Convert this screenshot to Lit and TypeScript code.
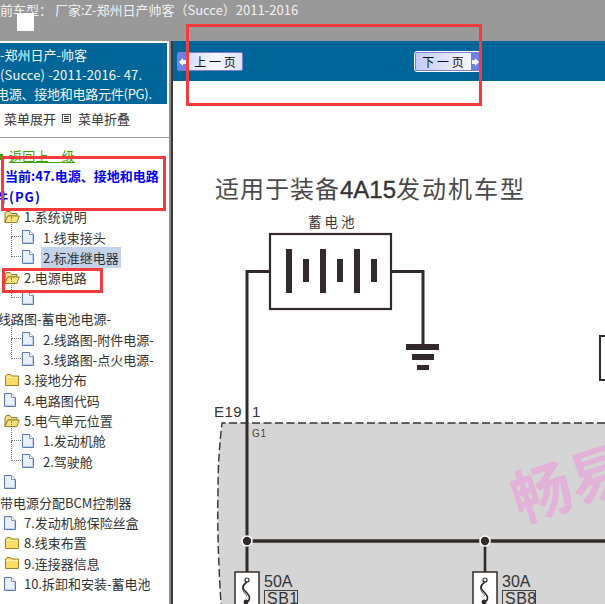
import { LitElement, html, css, svg } from "lit";
import { customElement } from "lit/decorators.js";

const folderOpen = html`<svg class="ic folder" viewBox="0 0 16 14"><path d="M1 3.5 2.5 1.5H6L7.5 3.5H13V6H4L1 12.5Z" fill="#f6dc86" stroke="#7d6c2c" stroke-width=".9"/><path d="M1 12.5 3.8 6H15.3L12.8 12.5Z" fill="#fbe27a" stroke="#9a8228" stroke-width="1"/></svg>`;
const folderClosed = html`<svg class="ic folder" viewBox="0 0 16 14"><path d="M1.5 12.5V3L3 1.5H6.5L8 3H14.5V12.5Z" fill="#fbdc6a" stroke="#9a8228" stroke-width="1"/><path d="M2 4.5H14" stroke="#fff3b0"/></svg>`;
const doc = html`<svg class="ic doc" viewBox="0 0 12 14"><path d="M.5.5H7.5L11.5 4.5V13.5H.5Z" fill="#e9f0fb" stroke="#5a78b8"/><path d="M7.5.5V4.5H11.5" fill="#fff" stroke="#7a94c8"/><path d="M1.5 12.5H10.5V5" fill="none" stroke="#bcd0ee"/></svg>`;

type Row = { t?: string; k: "f" | "c" | "d" | "s" | "x" | "blank" | "lead" | "blankTop"; sel?: boolean };
const rows: Row[] = [
  { t: "1.系统说明", k: "f" },
  { t: "1.线束接头", k: "s" },
  { t: "2.标准继电器", k: "s", sel: true },
  { t: "2.电源电路", k: "f" },
  { k: "blank" },
  { t: "线路图-蓄电池电源-", k: "x" },
  { t: "2.线路图-附件电源-", k: "s" },
  { t: "3.线路图-点火电源-", k: "s" },
  { t: "3.接地分布", k: "c" },
  { t: "4.电路图代码", k: "d" },
  { t: "5.电气单元位置", k: "f" },
  { t: "1.发动机舱", k: "s" },
  { t: "2.驾驶舱", k: "s" },
  { k: "blankTop" },
  { t: "带电源分配BCM控制器", k: "lead" },
  { t: "7.发动机舱保险丝盒", k: "d" },
  { t: "8.线束布置", k: "c" },
  { t: "9.连接器信息", k: "c" },
  { t: "10.拆卸和安装-蓄电池", k: "d" },
];

@customElement("app-root")
export class AppRoot extends LitElement {
  static styles = css`
    :host { display: block; width: 605px; height: 604px; position: relative; overflow: hidden; background: #fff;
      font-family: "Noto Sans CJK SC", "Liberation Sans", sans-serif; color: #333; }
    .top { height: 41px; background: #999; color: #f1f1f1; font-size: 13px; line-height: 20px; box-sizing: border-box; position: relative; white-space: nowrap; overflow: hidden; }
    .sq { position: absolute; left: 17px; top: 13px; width: 17px; height: 18px; background: #fff; }
    .main { display: flex; height: 563px; }
    .left { width: 169px; flex: none; overflow: hidden; padding-top: 2px; box-sizing: border-box; }
    .split { width: 4px; flex: none; background: linear-gradient(90deg, #8c8c8c 0, #8c8c8c 50%, #3a3a3a 50%, #3a3a3a 100%); }
    .right { flex: 1; position: relative; overflow: hidden; }
    .brand { width: 167px; height: 61px; background: #006699; color: #f2f6f8; font-size: 13px; line-height: 19.5px; padding-top: 2px; box-sizing: border-box; white-space: nowrap; overflow: hidden; }
    .l2 { letter-spacing: .12px; }
    .l3 { margin-left: -4px; letter-spacing: -.25px; }
    .tools { height: 34px; display: flex; align-items: center; font-size: 13px; padding: 0 0 5px 4px; box-sizing: border-box; border-bottom: 1px solid #999; color: #333; }
    .tools svg { width: 9px; height: 9px; margin: 0 7px 0 6px; }
    .back { height: 39px; padding: 8px 0 0 9px; box-sizing: border-box; font-size: 13px; color: #3fa400; text-decoration: underline; line-height: 20px; letter-spacing: .2px; position: relative; }
    .back i { position: absolute; left: 0; top: 16px; width: 3px; height: 6px; background: #3fa400; }
    .cur { color: #0000ee; font-weight: 700; font-size: 13px; line-height: 21px; height: 41px; padding-left: 5px; white-space: nowrap; margin-top: -12px; margin-bottom: .5px; }
    .cur div:last-child { margin-left: -10px; letter-spacing: 1px; }
    .tree { font-size: 13px; color: #333; }
    .row { height: 20.4px; display: flex; align-items: center; white-space: nowrap; position: relative; }
    .ic { flex: none; display: block; }
    .folder { width: 16px; height: 14px; margin: 0 4px 0 4px; }
    .doc { width: 12px; height: 14px; }
    .row.d .doc { margin: 0 8px 0 4px; }
    .row.s, .row.blank { padding-left: 11px; }
    .row.s .doc, .row.blank .doc { margin-left: 11px; margin-right: 9px; }
    .dots { position: absolute; left: 11px; top: -10px; height: 20px; width: 10px; border-left: 1px dotted #777; border-bottom: 1px dotted #777; box-sizing: border-box; }
    .sel { background: #c2d3ea; padding: 0 2px; margin-left: -2px; height: 21px; line-height: 21px; }
    .row.x { margin-left: -2px; }
    svg.draw { position: absolute; left: 0; top: 0; width: 432px; height: 563px; display: block; }
    .band { height: 40px; background: #006699; position: relative; }
    .btn { position: absolute; top: 11px; height: 19px; width: 66px; box-sizing: border-box; border: 1px solid #7f7fc8; border-radius: 2px; background: linear-gradient(90deg, #ccd2fb, #f8f8ff 60%, #dfe2fb); color: #111; font-size: 12px; line-height: 17px; display: flex; align-items: center; justify-content: center; }
    .prev { left: 4px; padding-left: 10px; }
    .next { left: 242px; outline: 1px solid #fff; padding-right: 10px; background: linear-gradient(90deg, #c2cbfa, #f6f6ff 85%); }
    .arr { position: absolute; top: 0; bottom: 0; width: 9px; background: #6f7fe8; display: flex; align-items: center; justify-content: center; }
    .prev .arr { left: 0; } .next .arr { right: 0; }
    .arr svg { width: 7px; height: 8px; }
    .red { position: absolute; border: 3px solid #f53b3b; box-sizing: border-box; pointer-events: none; }
    .r1 { left: 186px; top: 24px; width: 296px; height: 82px; }
    .r2 { left: 1px; top: 156px; width: 165px; height: 55px; }
    .r3 { left: 2px; top: 268px; width: 101px; height: 25px; }
  `;

  private fuse(x: number) {
    return svg`
      <rect x=${x - 12} y="531" width="24" height="40" fill="#fff" stroke="#332b2b" stroke-width="1.5"/>
      <circle cx=${x} cy="539" r="2" fill="#fff" stroke="#332b2b" stroke-width="1.2"/>
      <path d="M${x} 541C${x - 7} 546 ${x - 3} 549 ${x} 552C${x + 4} 556 ${x + 3} 560 ${x - 1} 561" fill="none" stroke="#332b2b" stroke-width="1.6"/>
      <path d="M${x - 3} 543C${x - 7} 548 ${x - 2} 552 ${x} 555" fill="none" stroke="#332b2b" stroke-width=".8"/>
      <circle cx=${x - 1} cy="561" r="2.4" fill="#332b2b"/>
    `;
  }

  private diagram() {
    const ink = "#332b2b";
    const bars = [116, 133, 150, 167, 184, 201];
    return svg`<svg class="draw" viewBox="0 0 432 563">
      <path d="M49 382 H432 V563 H48 C46 530 44 490 45 450 C45 420 47 400 49 382Z" fill="#d5d5d5"/>
      <path d="M432 382 H49 C47 400 45 420 45 450 C44 490 46 530 48 563" fill="none" stroke="#333" stroke-width="1.4" stroke-dasharray="8 3.5"/>
      <text x="42" y="157" font-size="24" letter-spacing="1" fill="#4a4a4a">适用于装备<tspan font-family="'Liberation Sans',sans-serif" fill="#333" stroke="#333" stroke-width=".35" letter-spacing="0">4A15</tspan><tspan letter-spacing="2">发动机车型</tspan></text>
      <text x="135" y="186" font-size="13.5" letter-spacing="3" fill="#3a3a3a">蓄电池</text>
      <rect x="97" y="193" width="121" height="75" fill="#fff" stroke=${ink} stroke-width="2.2"/>
      ${bars.map((x, i) => i % 2 === 0
        ? svg`<rect x=${x - 3} y="208" width="6" height="44" fill=${ink}/>`
        : svg`<rect x=${x - 3} y="218" width="6" height="23" fill=${ink}/>`)}
      <path d="M96 230.5H74V563" fill="none" stroke=${ink} stroke-width="3"/>
      <path d="M219 230.5H250V303" fill="none" stroke=${ink} stroke-width="3"/>
      <rect x="233" y="303" width="33" height="6" fill=${ink}/>
      <rect x="239" y="313" width="22" height="6" fill=${ink}/>
      <rect x="244" y="324" width="12" height="5" fill=${ink}/>
      <path d="M433 295H427V339H433" fill="#fff" stroke=${ink} stroke-width="2"/>
      <text x="41" y="376" font-size="15" font-family="'Liberation Sans',sans-serif" fill="#333" letter-spacing=".4">E19</text>
      <text x="79" y="376" font-size="15" font-family="'Liberation Sans',sans-serif" fill="#333">1</text>
      <text x="79" y="396" font-size="10" font-family="'Liberation Sans',sans-serif" fill="#444" letter-spacing=".6">G1</text>
      <text x="347" y="482" font-size="60" font-weight="700" fill="#e2b2d8" transform="rotate(-18 347 482)">畅易</text>
      <path d="M74 500H432" stroke=${ink} stroke-width="3.4"/>
      <path d="M312 500V531" stroke=${ink} stroke-width="2.6"/>
      <circle cx="74" cy="500" r="5" fill=${ink} stroke="#fff" stroke-width="1.6"/>
      <circle cx="312" cy="500" r="5" fill=${ink} stroke="#fff" stroke-width="1.6"/>
      ${this.fuse(74)}
      ${this.fuse(312)}
      <text x="91" y="546" font-size="16" font-family="'Liberation Sans',sans-serif" fill="#333">50A</text>
      <rect x="91.5" y="549.5" width="33" height="20" fill="none" stroke="#444"/>
      <text x="94" y="563" font-size="16" font-family="'Liberation Sans',sans-serif" fill="#333" letter-spacing=".5">SB1</text>
      <text x="329" y="546" font-size="16" font-family="'Liberation Sans',sans-serif" fill="#333">30A</text>
      <rect x="329.5" y="549.5" width="33" height="20" fill="none" stroke="#444"/>
      <text x="332" y="563" font-size="16" font-family="'Liberation Sans',sans-serif" fill="#333" letter-spacing=".5">SB8</text>
    </svg>`;
  }

  private row(r: Row) {
    const text = r.sel ? html`<span class="sel">${r.t}</span>` : html`<span>${r.t}</span>`;
    if (r.k === "f") return html`<div class="row f">${folderOpen}${text}</div>`;
    if (r.k === "c") return html`<div class="row c">${folderClosed}${text}</div>`;
    if (r.k === "d") return html`<div class="row d">${doc}${text}</div>`;
    if (r.k === "s") return html`<div class="row s"><i class="dots"></i>${doc}${text}</div>`;
    if (r.k === "blank") return html`<div class="row blank"><i class="dots"></i>${doc}</div>`;
    if (r.k === "blankTop") return html`<div class="row d">${doc}</div>`;
    return html`<div class="row ${r.k}">${text}</div>`;
  }

  render() {
    return html`
      <div class="top">前车型： 厂家:Z-郑州日产帅客（Succe）2011-2016<i class="sq"></i></div>
      <div class="main">
        <div class="left">
          <div class="brand">
            <div>-郑州日产-帅客</div>
            <div class="l2">(Succe) -2011-2016- 47.</div>
            <div class="l3">电源、接地和电路元件(PG).</div>
          </div>
          <div class="tools">
            <span>菜单展开</span>
            <svg viewBox="0 0 9 9"><rect x=".5" y=".5" width="8" height="8" fill="#fff" stroke="#555"/><path d="M2 2.5H7M2 4.5H7M2 6.5H7" stroke="#333"/></svg>
            <span>菜单折叠</span>
          </div>
          <div class="back"><i></i>返回上一级</div>
          <div class="cur"><div>当前:47.电源、接地和电路</div><div>件(PG)</div></div>
          <div class="tree">${rows.map((r) => this.row(r))}</div>
        </div>
        <div class="split"></div>
        <div class="right">
          <div class="band">
            <div class="btn prev"><span class="arr"><svg viewBox="0 0 7 8"><path d="M0 4 4 0V2H7V6H4V8Z" fill="#fff"/></svg></span>上 一 页</div>
            <div class="btn next">下 一 页<span class="arr"><svg viewBox="0 0 7 8"><path d="M7 4 3 0V2H0V6H3V8Z" fill="#fff"/></svg></span></div>
          </div>
          ${this.diagram()}
        </div>
      </div>
      <div class="red r1"></div>
      <div class="red r2"></div>
      <div class="red r3"></div>
    `;
  }
}
